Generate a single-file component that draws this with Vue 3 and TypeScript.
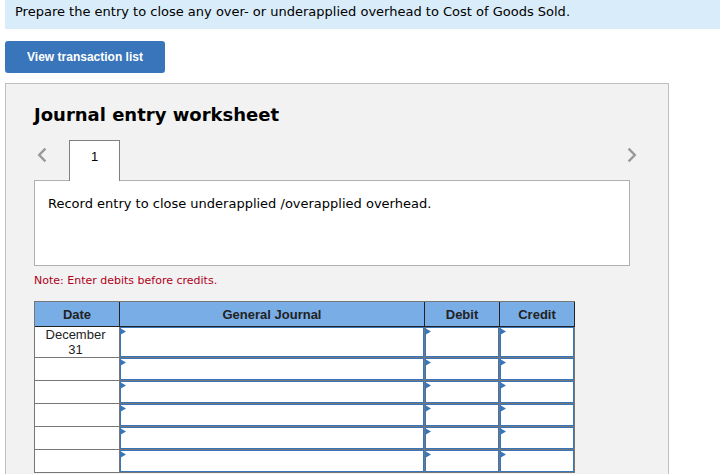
<script setup lang="ts">
import { ref } from 'vue'

interface JournalRow {
  date: string
  account: string
  debit: string
  credit: string
}

const rows = ref<JournalRow[]>(
  Array.from({ length: 6 }, (_, i) => ({
    date: i === 0 ? 'December 31' : '',
    account: '',
    debit: '',
    credit: '',
  })),
)
</script>

<template>
  <main class="page">
    <p class="banner">Prepare the entry to close any over- or underapplied overhead to Cost of Goods Sold.</p>
    <button type="button" class="view-list">View transaction list</button>

    <section class="worksheet">
      <h1>Journal entry worksheet</h1>
      <nav class="tabs">
        <button type="button" class="arrow" aria-label="Previous entry">
          <svg width="10" height="16" viewBox="0 0 10 16"><path d="M8.4 1.7 2.2 8l6.2 6.3" /></svg>
        </button>
        <button type="button" class="tab">1</button>
        <button type="button" class="arrow next" aria-label="Next entry">
          <svg width="10" height="16" viewBox="0 0 10 16"><path d="M1.6 1.7 7.8 8l-6.2 6.3" /></svg>
        </button>
      </nav>
      <div class="prompt">Record entry to close underapplied /overapplied overhead.</div>
      <p class="note">Note: Enter debits before credits.</p>

      <table>
        <thead>
          <tr>
            <th class="date">Date</th>
            <th>General Journal</th>
            <th class="amount">Debit</th>
            <th class="amount">Credit</th>
          </tr>
        </thead>
        <tbody>
          <tr v-for="(row, i) in rows" :key="i">
            <td class="date">{{ row.date }}</td>
            <td class="entry"><input v-model="row.account" type="text" aria-label="General Journal" /></td>
            <td class="entry"><input v-model="row.debit" type="text" aria-label="Debit" /></td>
            <td class="entry"><input v-model="row.credit" type="text" aria-label="Credit" /></td>
          </tr>
        </tbody>
      </table>
    </section>
  </main>
</template>

<style>
body {
  background: #fff;
}
</style>

<style scoped>
.page {
  box-sizing: border-box;
  min-height: 100vh;
  display: flex;
  flex-direction: column;
  align-items: flex-start;
  padding-left: 5px;
  font-family: Verdana, "DejaVu Sans", sans-serif;
  font-size: 13px;
  color: #000;
}
.banner {
  box-sizing: border-box;
  align-self: stretch;
  margin: 0;
  padding: 2px 10px 7px;
  line-height: 20px;
  background: #d9ecf9;
}
.view-list {
  width: 160px;
  height: 32px;
  margin: 12px 0 10px;
  padding: 0;
  border: 0;
  border-radius: 3px;
  background: #3975ba;
  color: #fff;
  font: bold 12px "Liberation Sans", Arial, sans-serif;
}
.worksheet {
  box-sizing: border-box;
  flex: 1;
  align-self: stretch;
  margin-right: 51px;
  padding: 18px 38px 0 28px;
  border: 1px solid #c0c0c0;
  border-bottom: 0;
  background: #f2f2f2;
}
h1 {
  margin: 0;
  font-size: 18px;
  line-height: 26px;
}
.tabs {
  display: flex;
  align-items: flex-start;
  margin-top: 12px;
  padding-left: 3px;
}
.arrow {
  width: 10px;
  height: 30px;
  padding: 0;
  border: 0;
  background: none;
}
.arrow svg {
  display: block;
  fill: none;
  stroke: #999;
  stroke-width: 2.4;
}
.next {
  margin-left: auto;
  margin-right: -7px;
}
.tab {
  position: relative;
  box-sizing: border-box;
  width: 51px;
  height: 41px;
  margin: 0 0 -1px 22px;
  padding: 0 0 10px;
  border: 1px solid #808080;
  border-bottom: 0;
  background: #fff;
  color: #000;
  font: 13px "Liberation Sans", Arial, sans-serif;
}
.prompt {
  box-sizing: border-box;
  min-height: 86px;
  padding: 13px;
  border: 1px solid #b0b0b0;
  background: #fff;
  line-height: 20px;
}
.note {
  margin: 7px 0 12px;
  font-size: 11px;
  line-height: 16px;
  color: #b00020;
}
table {
  table-layout: fixed;
  width: calc(100% - 55px);
  border: 1px solid #777;
  border-width: 1px 0 0 1px;
  border-spacing: 0;
  font-family: "Liberation Sans", Arial, sans-serif;
  font-size: 13px;
  line-height: 15px;
  color: #222;
}
th,
td {
  box-sizing: border-box;
  height: 23px;
  padding: 0;
  border: 1px solid #777;
  border-width: 0 1px 1px 0;
  background: #fff;
  text-align: center;
}
th {
  height: 25px;
  border-color: #222;
  background: #79ade6;
}
.date {
  width: 85px;
}
td.date {
  padding: 0 8px 0 5px;
}
.amount {
  width: 75px;
}
tbody tr:first-child td {
  height: 31px;
}
.entry {
  position: relative;
}
.entry input {
  position: absolute;
  inset: 0;
  box-sizing: border-box;
  width: 100%;
  height: 100%;
  padding: 0 8px;
  border: 1px solid #3975ba;
  border-radius: 0;
  background: #fff;
  font: inherit;
}
.entry::after {
  content: "";
  position: absolute;
  z-index: 1;
  top: 1px;
  left: 0;
  width: 6px;
  height: 7px;
  background: #3975ba;
  clip-path: polygon(0 0, 100% 50%, 0 100%);
  pointer-events: none;
}
</style>
